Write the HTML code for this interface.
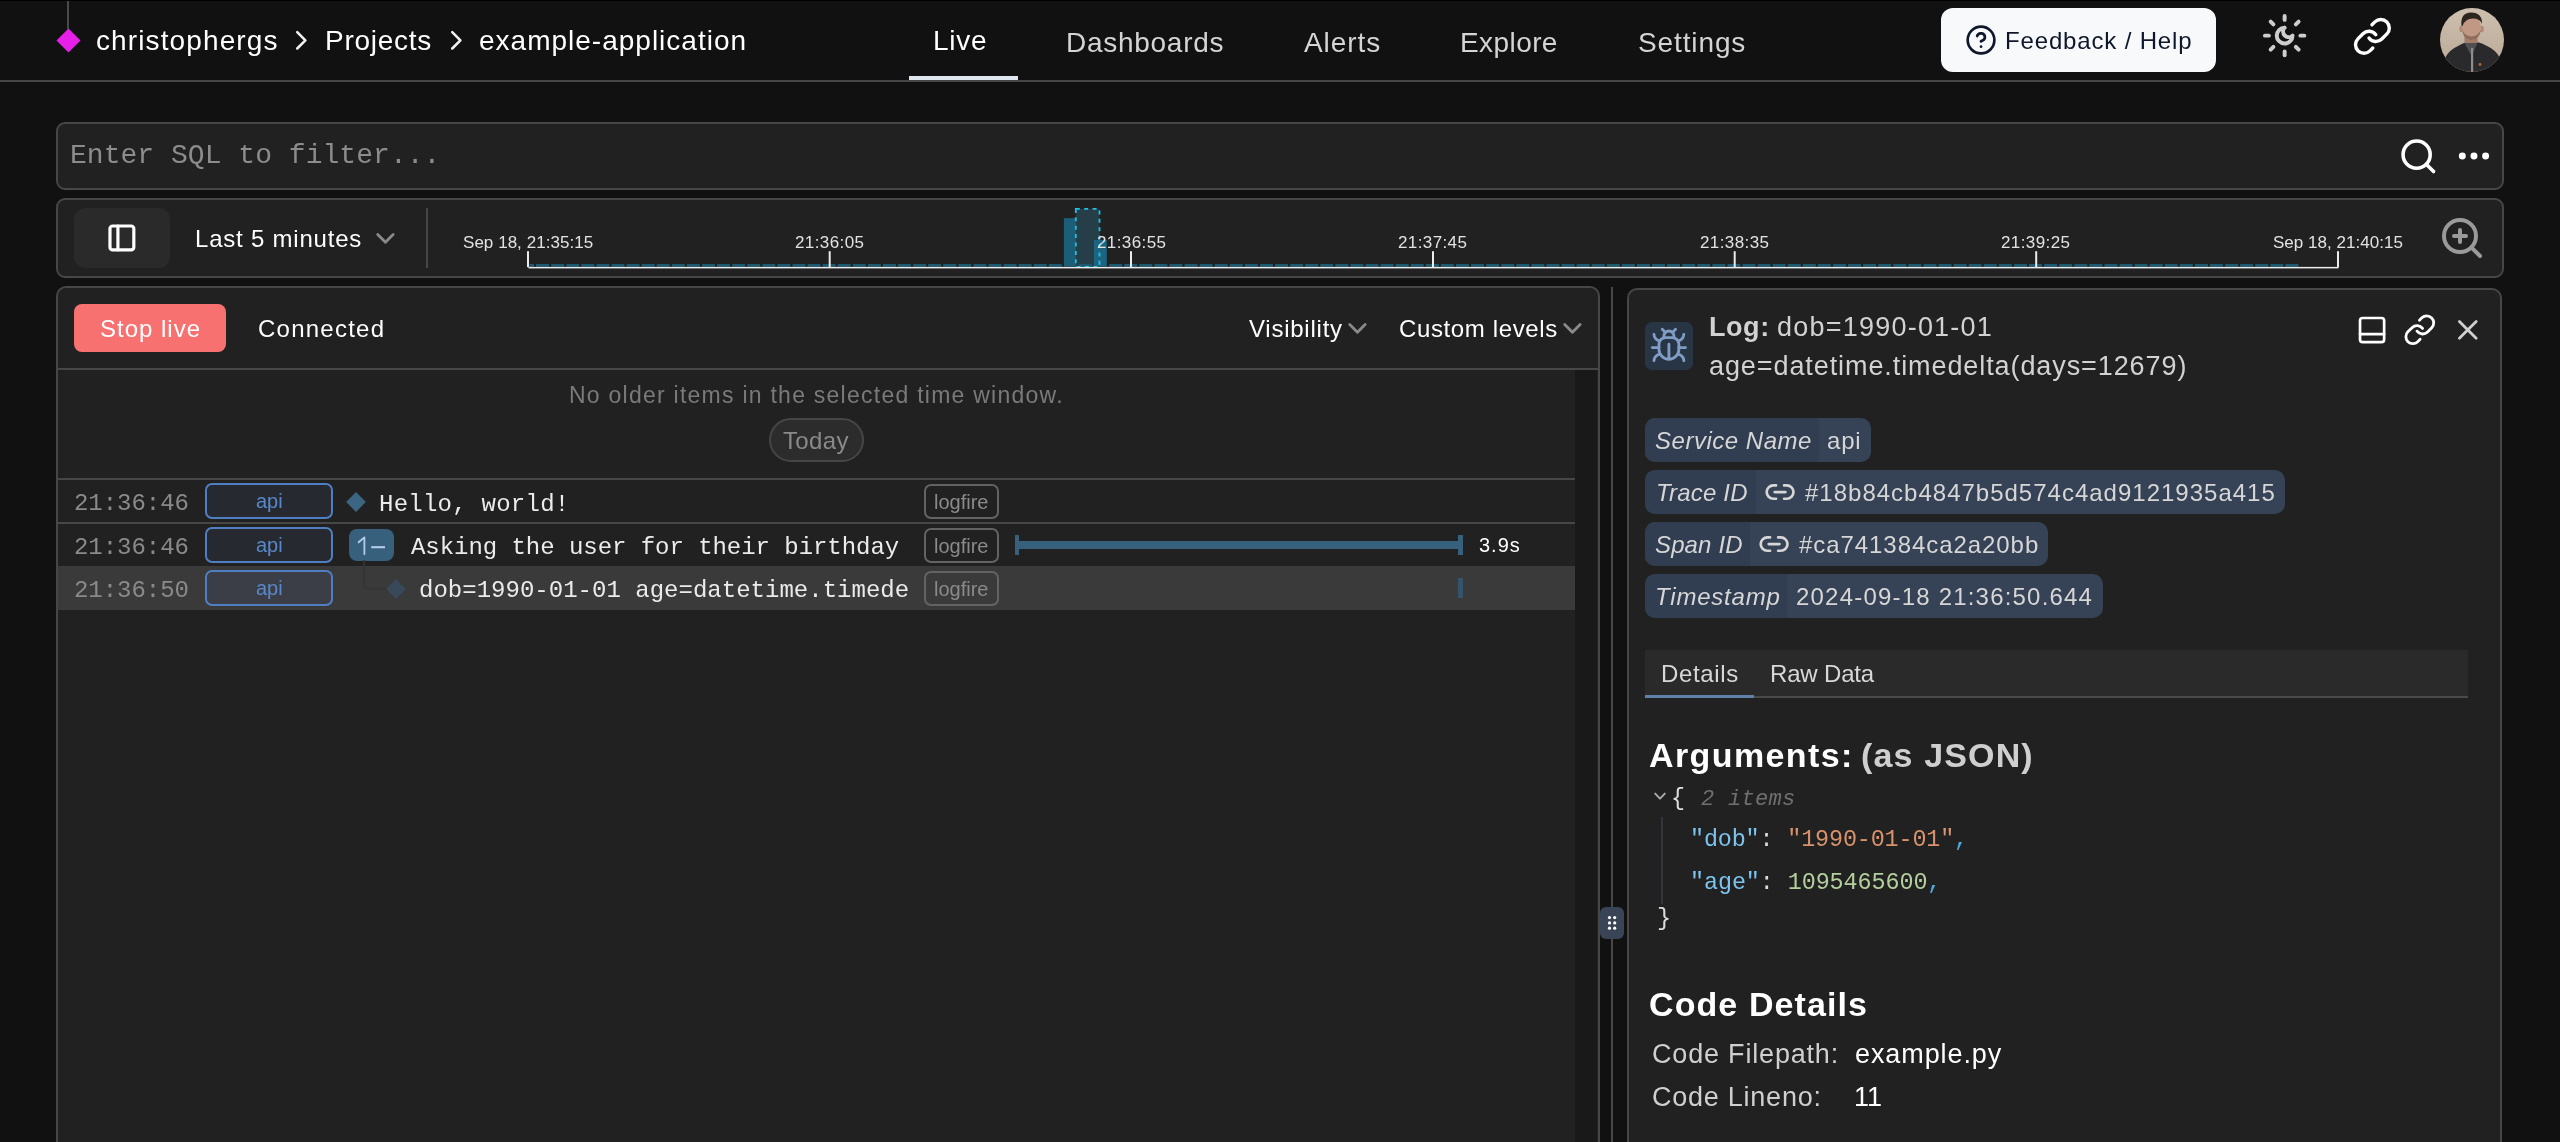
<!DOCTYPE html>
<html><head><meta charset="utf-8">
<style>
*{box-sizing:border-box;margin:0;padding:0}
html,body{width:2560px;height:1142px;overflow:hidden;background:#111111;font-family:"Liberation Sans",sans-serif;color:#fff}
.a{position:absolute;white-space:pre;line-height:1;will-change:transform}
.s{position:absolute}
</style></head><body>
<div class="s" style="left:0;top:0;width:2560px;height:1px;background:#000"></div>
<!-- ===== header ===== -->
<div class="s" style="left:67px;top:1px;width:2px;height:28px;background:#4a4a4a"></div>
<div class="s" style="left:59.5px;top:31.5px;width:17px;height:17px;background:#e620e9;transform:rotate(45deg)"></div>


<div class="s" style="left:909px;top:76px;width:109px;height:4px;background:#e0e6ef"></div>
<div class="s" style="left:1941px;top:8px;width:275px;height:64px;border-radius:12px;background:#f8f9fb"></div>

<!-- sun-moon -->

<!-- link -->

<!-- avatar -->
<svg class="s" style="left:2440px;top:8px" width="64" height="64" viewBox="0 0 64 64"><defs><clipPath id="av"><circle cx="32" cy="32" r="32"/></clipPath><linearGradient id="avbg" x1="0" y1="0" x2="0" y2="1"><stop offset="0" stop-color="#cdbfae"/><stop offset="1" stop-color="#b9a896"/></linearGradient></defs><g clip-path="url(#av)">
<rect width="64" height="64" fill="url(#avbg)"/>
<path d="M2 64 L5 50 Q9 42 18 38 Q23 35 27 34 L37 34 Q42 35 47 38 Q56 42 60 50 L63 64 Z" fill="#2a292b"/>
<path d="M24.5 35 L31.5 48 L37.5 35 Z" fill="#505052"/>
<rect x="24.5" y="26" width="13" height="9" fill="#a47d69"/>
<ellipse cx="21.3" cy="21" rx="2" ry="3.2" fill="#b08a76"/>
<ellipse cx="41.8" cy="21" rx="2" ry="3.2" fill="#b08a76"/>
<ellipse cx="31.5" cy="20" rx="9.6" ry="11.6" fill="#c09884"/>
<path d="M22.2 22 Q23 31 31.5 32 Q40 31 40.8 22 Q38 28 31.5 28.5 Q25 28 22.2 22 Z" fill="#7d5f50" opacity="0.75"/>
<path d="M21.5 18 Q20 5 31 4.6 Q42.5 5 42 16 Q40 10.5 33 10.5 Q25 10.5 22.5 18 Z" fill="#2d2520"/>
<rect x="31" y="40" width="2.2" height="24" fill="#8d8d8d"/>
<circle cx="40" cy="56.5" r="1.4" fill="#b8643a"/>
</g></svg>
<div class="s" style="left:0;top:80px;width:2560px;height:2px;background:#474747"></div>

<!-- ===== SQL box ===== -->
<div class="s" style="left:56px;top:122px;width:2448px;height:68px;border:2px solid #474747;border-radius:9px;background:#212121"></div>



<!-- ===== timeline box ===== -->
<div class="s" style="left:56px;top:198px;width:2448px;height:80px;border:2px solid #474747;border-radius:9px;background:#212121"></div>
<div class="s" style="left:74px;top:208px;width:96px;height:60px;border-radius:11px;background:#2a2a2a"></div>


<div class="s" style="left:426px;top:208px;width:2px;height:60px;background:#474747"></div>
<svg class="s" style="left:0;top:0" width="2560" height="290" viewBox="0 0 2560 290">
<g fill="#1d5a6f"><rect x="529.50" y="264" width="4.52" height="2.9"/><rect x="536.10" y="264" width="13.00" height="2.9"/><rect x="551.18" y="264" width="13.00" height="2.9"/><rect x="566.26" y="264" width="13.00" height="2.9"/><rect x="581.34" y="264" width="13.00" height="2.9"/><rect x="596.42" y="264" width="13.00" height="2.9"/><rect x="611.50" y="264" width="13.00" height="2.9"/><rect x="626.58" y="264" width="13.00" height="2.9"/><rect x="641.66" y="264" width="13.00" height="2.9"/><rect x="656.74" y="264" width="13.00" height="2.9"/><rect x="671.82" y="264" width="13.00" height="2.9"/><rect x="686.90" y="264" width="13.00" height="2.9"/><rect x="701.98" y="264" width="13.00" height="2.9"/><rect x="717.06" y="264" width="13.00" height="2.9"/><rect x="732.14" y="264" width="13.00" height="2.9"/><rect x="747.22" y="264" width="13.00" height="2.9"/><rect x="762.30" y="264" width="13.00" height="2.9"/><rect x="777.38" y="264" width="13.00" height="2.9"/><rect x="792.46" y="264" width="13.00" height="2.9"/><rect x="807.54" y="264" width="13.00" height="2.9"/><rect x="822.62" y="264" width="13.00" height="2.9"/><rect x="837.70" y="264" width="13.00" height="2.9"/><rect x="852.78" y="264" width="13.00" height="2.9"/><rect x="867.86" y="264" width="13.00" height="2.9"/><rect x="882.94" y="264" width="13.00" height="2.9"/><rect x="898.02" y="264" width="13.00" height="2.9"/><rect x="913.10" y="264" width="13.00" height="2.9"/><rect x="928.18" y="264" width="13.00" height="2.9"/><rect x="943.26" y="264" width="13.00" height="2.9"/><rect x="958.34" y="264" width="13.00" height="2.9"/><rect x="973.42" y="264" width="13.00" height="2.9"/><rect x="988.50" y="264" width="13.00" height="2.9"/><rect x="1003.58" y="264" width="13.00" height="2.9"/><rect x="1018.66" y="264" width="13.00" height="2.9"/><rect x="1033.74" y="264" width="13.00" height="2.9"/><rect x="1048.82" y="264" width="13.00" height="2.9"/><rect x="1078.98" y="264" width="13.00" height="2.9"/><rect x="1109.14" y="264" width="13.00" height="2.9"/><rect x="1124.22" y="264" width="13.00" height="2.9"/><rect x="1139.30" y="264" width="13.00" height="2.9"/><rect x="1154.38" y="264" width="13.00" height="2.9"/><rect x="1169.46" y="264" width="13.00" height="2.9"/><rect x="1184.54" y="264" width="13.00" height="2.9"/><rect x="1199.62" y="264" width="13.00" height="2.9"/><rect x="1214.70" y="264" width="13.00" height="2.9"/><rect x="1229.78" y="264" width="13.00" height="2.9"/><rect x="1244.86" y="264" width="13.00" height="2.9"/><rect x="1259.94" y="264" width="13.00" height="2.9"/><rect x="1275.02" y="264" width="13.00" height="2.9"/><rect x="1290.10" y="264" width="13.00" height="2.9"/><rect x="1305.18" y="264" width="13.00" height="2.9"/><rect x="1320.26" y="264" width="13.00" height="2.9"/><rect x="1335.34" y="264" width="13.00" height="2.9"/><rect x="1350.42" y="264" width="13.00" height="2.9"/><rect x="1365.50" y="264" width="13.00" height="2.9"/><rect x="1380.58" y="264" width="13.00" height="2.9"/><rect x="1395.66" y="264" width="13.00" height="2.9"/><rect x="1410.74" y="264" width="13.00" height="2.9"/><rect x="1425.82" y="264" width="13.00" height="2.9"/><rect x="1440.90" y="264" width="13.00" height="2.9"/><rect x="1455.98" y="264" width="13.00" height="2.9"/><rect x="1471.06" y="264" width="13.00" height="2.9"/><rect x="1486.14" y="264" width="13.00" height="2.9"/><rect x="1501.22" y="264" width="13.00" height="2.9"/><rect x="1516.30" y="264" width="13.00" height="2.9"/><rect x="1531.38" y="264" width="13.00" height="2.9"/><rect x="1546.46" y="264" width="13.00" height="2.9"/><rect x="1561.54" y="264" width="13.00" height="2.9"/><rect x="1576.62" y="264" width="13.00" height="2.9"/><rect x="1591.70" y="264" width="13.00" height="2.9"/><rect x="1606.78" y="264" width="13.00" height="2.9"/><rect x="1621.86" y="264" width="13.00" height="2.9"/><rect x="1636.94" y="264" width="13.00" height="2.9"/><rect x="1652.02" y="264" width="13.00" height="2.9"/><rect x="1667.10" y="264" width="13.00" height="2.9"/><rect x="1682.18" y="264" width="13.00" height="2.9"/><rect x="1697.26" y="264" width="13.00" height="2.9"/><rect x="1712.34" y="264" width="13.00" height="2.9"/><rect x="1727.42" y="264" width="13.00" height="2.9"/><rect x="1742.50" y="264" width="13.00" height="2.9"/><rect x="1757.58" y="264" width="13.00" height="2.9"/><rect x="1772.66" y="264" width="13.00" height="2.9"/><rect x="1787.74" y="264" width="13.00" height="2.9"/><rect x="1802.82" y="264" width="13.00" height="2.9"/><rect x="1817.90" y="264" width="13.00" height="2.9"/><rect x="1832.98" y="264" width="13.00" height="2.9"/><rect x="1848.06" y="264" width="13.00" height="2.9"/><rect x="1863.14" y="264" width="13.00" height="2.9"/><rect x="1878.22" y="264" width="13.00" height="2.9"/><rect x="1893.30" y="264" width="13.00" height="2.9"/><rect x="1908.38" y="264" width="13.00" height="2.9"/><rect x="1923.46" y="264" width="13.00" height="2.9"/><rect x="1938.54" y="264" width="13.00" height="2.9"/><rect x="1953.62" y="264" width="13.00" height="2.9"/><rect x="1968.70" y="264" width="13.00" height="2.9"/><rect x="1983.78" y="264" width="13.00" height="2.9"/><rect x="1998.86" y="264" width="13.00" height="2.9"/><rect x="2013.94" y="264" width="13.00" height="2.9"/><rect x="2029.02" y="264" width="13.00" height="2.9"/><rect x="2044.10" y="264" width="13.00" height="2.9"/><rect x="2059.18" y="264" width="13.00" height="2.9"/><rect x="2074.26" y="264" width="13.00" height="2.9"/><rect x="2089.34" y="264" width="13.00" height="2.9"/><rect x="2104.42" y="264" width="13.00" height="2.9"/><rect x="2119.50" y="264" width="13.00" height="2.9"/><rect x="2134.58" y="264" width="13.00" height="2.9"/><rect x="2149.66" y="264" width="13.00" height="2.9"/><rect x="2164.74" y="264" width="13.00" height="2.9"/><rect x="2179.82" y="264" width="13.00" height="2.9"/><rect x="2194.90" y="264" width="13.00" height="2.9"/><rect x="2209.98" y="264" width="13.00" height="2.9"/><rect x="2225.06" y="264" width="13.00" height="2.9"/><rect x="2240.14" y="264" width="13.00" height="2.9"/><rect x="2255.22" y="264" width="13.00" height="2.9"/><rect x="2270.30" y="264" width="13.00" height="2.9"/><rect x="2285.38" y="264" width="13.00" height="2.9"/></g>
<rect x="1063.9" y="218.1" width="13" height="48.4" fill="#1b5e78"/>
<rect x="1075.8" y="208.9" width="23.7" height="58.1" fill="#253e48"/>
<rect x="1093.9" y="239.9" width="12.9" height="26.6" fill="#1b6580"/>
<rect x="1078.9" y="264" width="13" height="2.9" fill="#1d5a6f"/><rect x="1075.8" y="208.9" width="23.7" height="58.1" fill="none" stroke="#1ec0e6" stroke-width="1.8" stroke-dasharray="4 4.4"/>
<rect x="528.5" y="266.9" width="1810" height="1.5" fill="#ececec"/>
<g fill="#ececec"><rect x="527" y="251.2" width="2" height="16"/><rect x="828.7" y="251.2" width="2" height="16"/><rect x="1130" y="251.2" width="2" height="16"/><rect x="1432" y="251.2" width="2" height="16"/><rect x="1733.7" y="251.2" width="2" height="16"/><rect x="2035.2" y="251.2" width="2" height="16"/><rect x="2337" y="251.2" width="2" height="16"/></g>
</svg>


<!-- ===== left panel ===== -->
<div class="s" style="left:56px;top:286px;width:1544px;height:900px;border:2px solid #474747;border-radius:10px;background:#212121"></div>
<div class="s" style="left:74px;top:304px;width:152px;height:48px;border-radius:8px;background:#f87171"></div>


<div class="s" style="left:58px;top:368px;width:1540px;height:2px;background:#474747"></div>
<div class="s" style="left:1575px;top:370px;width:22px;height:780px;background:#191919"></div>
<div class="s" style="left:769px;top:418px;width:95px;height:44px;border:2px solid #464646;border-radius:22px;background:#2c2c2c"></div>
<div class="s" style="left:58px;top:478px;width:1517px;height:2px;background:#474747"></div>
<div class="s" style="left:58px;top:522px;width:1517px;height:2px;background:#474747"></div>
<div class="s" style="left:58px;top:566px;width:1517px;height:44px;background:#3a3a3a"></div>
<!-- api badges -->
<div class="s" style="left:205px;top:483px;width:128px;height:36px;border:2px solid #4f7fc0;border-radius:7px;background:#262930"></div>
<div class="s" style="left:205px;top:527px;width:128px;height:36px;border:2px solid #4f7fc0;border-radius:7px;background:#262930"></div>
<div class="s" style="left:205px;top:570px;width:128px;height:36px;border:2px solid #4f7fc0;border-radius:7px;background:#3b3e46"></div>
<!-- logfire badges -->
<div class="s" style="left:924px;top:484px;width:75px;height:35px;border:2px solid #636363;border-radius:7px"></div>
<div class="s" style="left:924px;top:527.5px;width:75px;height:35px;border:2px solid #636363;border-radius:7px"></div>
<div class="s" style="left:924px;top:571px;width:75px;height:35px;border:2px solid #636363;border-radius:7px"></div>
<!-- diamonds -->
<div class="s" style="left:349px;top:495px;width:14px;height:14px;background:#3b6580;transform:rotate(45deg)"></div>
<div class="s" style="left:389px;top:581.7px;width:14px;height:14px;background:#37495b;transform:rotate(45deg)"></div>
<!-- 1- badge -->
<div class="s" style="left:349px;top:529px;width:45px;height:32px;border-radius:8px;background:#36607c"></div>
<svg class="s" style="left:349px;top:529px" width="45" height="32" viewBox="0 0 45 32"><path d="M9.6 13.3 L15.4 8.4 V25" fill="none" stroke="#b4cdec" stroke-width="1.8" stroke-linejoin="round" stroke-linecap="round"/><path d="M22.2 18.2 H36" stroke="#b4cdec" stroke-width="2.1"/></svg>
<svg class="s" style="left:356px;top:560px" width="40" height="32" viewBox="0 0 40 32"><path d="M8 0 V23.5 Q8 28.6 13 28.6 H31" fill="none" stroke="#353535" stroke-width="1.8"/></svg>
<!-- duration bar -->
<div class="s" style="left:1015px;top:541px;width:448px;height:8px;background:#36607c"></div>
<div class="s" style="left:1015px;top:535px;width:4px;height:20px;background:#36607c"></div>
<div class="s" style="left:1458px;top:535px;width:5px;height:20px;background:#36607c"></div>
<div class="s" style="left:1458px;top:578px;width:5px;height:20px;background:#34546e"></div>

<!-- ===== gutter ===== -->
<div class="s" style="left:1611px;top:287px;width:2px;height:860px;background:#474747"></div>
<div class="s" style="left:1600px;top:907px;width:24px;height:32px;border-radius:6px;background:#394456"></div>
<svg class="s" style="left:1600px;top:907px" width="24" height="32" viewBox="0 0 24 32"><g fill="#fff"><circle cx="9.5" cy="10.6" r="1.6"/><circle cx="14.7" cy="10.6" r="1.6"/><circle cx="9.5" cy="15.9" r="1.6"/><circle cx="14.7" cy="15.9" r="1.6"/><circle cx="9.5" cy="21.2" r="1.6"/><circle cx="14.7" cy="21.2" r="1.6"/></g></svg>

<!-- ===== right panel ===== -->
<div class="s" style="left:1627px;top:288px;width:875px;height:900px;border:2px solid #474747;border-radius:10px;background:#212121"></div>
<div class="s" style="left:1645px;top:322px;width:48px;height:48px;border-radius:7px;background:#283545"></div>




<!-- chips -->
<div class="s" style="left:1645px;top:418px;width:226px;height:44px;border-radius:10px;background:#364255;overflow:hidden"><div class="s" style="left:0;top:0;width:174px;height:44px;background:#313d50"></div></div>
<div class="s" style="left:1645px;top:470px;width:640px;height:44px;border-radius:10px;background:#364255;overflow:hidden"><div class="s" style="left:0;top:0;width:111px;height:44px;background:#313d50"></div></div>
<div class="s" style="left:1645px;top:522px;width:403px;height:44px;border-radius:10px;background:#364255;overflow:hidden"><div class="s" style="left:0;top:0;width:105px;height:44px;background:#313d50"></div></div>
<div class="s" style="left:1645px;top:574px;width:458px;height:44px;border-radius:10px;background:#364255;overflow:hidden"><div class="s" style="left:0;top:0;width:142px;height:44px;background:#313d50"></div></div>


<!-- tabs -->
<div class="s" style="left:1645px;top:650px;width:823px;height:48px;background:#2a2a2a"></div>
<div class="s" style="left:1645px;top:696px;width:823px;height:2px;background:#4a4a4a"></div>
<div class="s" style="left:1645px;top:694.8px;width:109px;height:3px;background:#5f80a8"></div>
<!-- json -->
<svg class="s" style="left:1650px;top:788px" width="20" height="16" viewBox="0 0 20 16"><path d="M5.2 5.6 L10 10.6 L14.8 5.6" fill="none" stroke="#aaaaaa" stroke-width="2" stroke-linecap="round" stroke-linejoin="round"/></svg>
<div class="s" style="left:1661px;top:817px;width:2px;height:87px;background:#35353c"></div>
<svg class="s" style="left:1964.97px;top:23.67px" width="32.06" height="32.06" viewBox="0 0 24 24" fill="none" stroke="#0f172a" stroke-width="2" stroke-linecap="round" stroke-linejoin="round"><circle cx="12" cy="12" r="10"/><path d="M9.09 9a3 3 0 0 1 5.83 1c0 2-3 3-3 3"/><path d="M12 17h.01"/></svg>
<svg class="s" style="left:2260.86px;top:12.30px" width="47.28" height="47.28" viewBox="0 0 24 24" fill="none" stroke="#cdcdcd" stroke-width="2" stroke-linecap="round" stroke-linejoin="round"><path d="M12 8a2.83 2.83 0 0 0 4 4 4 4 0 1 1-4-4"/><path d="M12 2v2"/><path d="M12 20v2"/><path d="m4.9 4.9 1.4 1.4"/><path d="m17.7 17.7 1.4 1.4"/><path d="M2 12h2"/><path d="M20 12h2"/><path d="m6.3 17.7-1.4 1.4"/><path d="m19.1 4.9-1.4 1.4"/></svg>
<svg class="s" style="left:2351.50px;top:15.55px" width="40.80" height="40.80" viewBox="0 0 24 24" fill="none" stroke="#ffffff" stroke-width="2" stroke-linecap="round" stroke-linejoin="round"><path d="M10 13a5 5 0 0 0 7.54.54l3-3a5 5 0 0 0-7.07-7.07l-1.72 1.71"/><path d="M14 11a5 5 0 0 0-7.54-.54l-3 3a5 5 0 0 0 7.07 7.07l1.71-1.71"/></svg>
<svg class="s" style="left:2398.07px;top:135.67px" width="40.66" height="40.66" viewBox="0 0 24 24" fill="none" stroke="#ffffff" stroke-width="2.1" stroke-linecap="round" stroke-linejoin="round"><circle cx="11" cy="11" r="8"/><path d="m21 21-4.3-4.3"/></svg>
<svg class="s" style="left:2454.03px;top:135.83px" width="39.94" height="39.94" viewBox="0 0 24 24" fill="none" stroke="#ffffff" stroke-width="2.2" stroke-linecap="round" stroke-linejoin="round"><circle cx="12" cy="12" r="1"/><circle cx="19" cy="12" r="1"/><circle cx="5" cy="12" r="1"/></svg>
<svg class="s" style="left:2438.00px;top:213.90px" width="48.00" height="48.00" viewBox="0 0 24 24" fill="none" stroke="#9a9a9a" stroke-width="2" stroke-linecap="round" stroke-linejoin="round"><circle cx="11" cy="11" r="8"/><line x1="21" x2="16.65" y1="21" y2="16.65"/><line x1="11" x2="11" y1="8" y2="14"/><line x1="8" x2="14" y1="11" y2="11"/></svg>
<svg class="s" style="left:105.95px;top:221.95px" width="31.80" height="31.80" viewBox="0 0 24 24" fill="none" stroke="#ffffff" stroke-width="2.4" stroke-linecap="round" stroke-linejoin="round"><rect width="18" height="18" x="3" y="3" rx="2"/><path d="M9 3v18"/></svg>
<svg class="s" style="left:369.57px;top:222.77px" width="30.86" height="30.86" viewBox="0 0 24 24" fill="none" stroke="#8a8a8a" stroke-width="2.2" stroke-linecap="round" stroke-linejoin="round"><path d="m6 9 6 6 6-6"/></svg>
<svg class="s" style="left:1342.47px;top:312.67px" width="30.86" height="30.86" viewBox="0 0 24 24" fill="none" stroke="#8a8a8a" stroke-width="2.2" stroke-linecap="round" stroke-linejoin="round"><path d="m6 9 6 6 6-6"/></svg>
<svg class="s" style="left:1557.47px;top:312.67px" width="30.86" height="30.86" viewBox="0 0 24 24" fill="none" stroke="#8a8a8a" stroke-width="2.2" stroke-linecap="round" stroke-linejoin="round"><path d="m6 9 6 6 6-6"/></svg>
<svg class="s" style="left:284.68px;top:23.68px" width="32.64" height="32.64" viewBox="0 0 24 24" fill="none" stroke="#f0f0f0" stroke-width="1.9" stroke-linecap="round" stroke-linejoin="round"><path d="m9 18 6-6-6-6"/></svg>
<svg class="s" style="left:439.68px;top:23.68px" width="32.64" height="32.64" viewBox="0 0 24 24" fill="none" stroke="#f0f0f0" stroke-width="1.9" stroke-linecap="round" stroke-linejoin="round"><path d="m9 18 6-6-6-6"/></svg>
<svg class="s" style="left:2451.20px;top:313.05px" width="33.60" height="33.60" viewBox="0 0 24 24" fill="none" stroke="#cfcfcf" stroke-width="2" stroke-linecap="round" stroke-linejoin="round"><path d="M18 6 6 18"/><path d="m6 6 12 12"/></svg>
<svg class="s" style="left:2355.52px;top:313.92px" width="32.16" height="32.16" viewBox="0 0 24 24" fill="none" stroke="#ffffff" stroke-width="2" stroke-linecap="round" stroke-linejoin="round"><rect width="18" height="18" x="3" y="3" rx="2"/><path d="M3 15h18"/></svg>
<svg class="s" style="left:2403.00px;top:313.20px" width="33.60" height="33.60" viewBox="0 0 24 24" fill="none" stroke="#ffffff" stroke-width="2" stroke-linecap="round" stroke-linejoin="round"><path d="M10 13a5 5 0 0 0 7.54.54l3-3a5 5 0 0 0-7.07-7.07l-1.72 1.71"/><path d="M14 11a5 5 0 0 0-7.54-.54l-3 3a5 5 0 0 0 7.07 7.07l1.71-1.71"/></svg>
<svg class="s" style="left:1649.33px;top:326.21px" width="39.84" height="39.84" viewBox="0 0 24 24" fill="none" stroke="#809dc5" stroke-width="1.7" stroke-linecap="round" stroke-linejoin="round"><path d="m8 2 1.88 1.88"/><path d="M14.12 3.88 16 2"/><path d="M9 7.13v-1a3.003 3.003 0 1 1 6 0v1"/><path d="M12 20c-3.3 0-6-2.7-6-6v-3a4 4 0 0 1 4-4h4a4 4 0 0 1 4 4v3c0 3.3-2.7 6-6 6"/><path d="M12 20v-9"/><path d="M6.53 9C4.6 8.8 3 7.1 3 5"/><path d="M6 13H2"/><path d="M3 21c0-2.1 1.7-3.9 3.8-4"/><path d="M20.97 5c0 2.1-1.6 3.8-3.5 4"/><path d="M22 13h-4"/><path d="M17.2 17c2.1.1 3.8 1.9 3.8 4"/></svg>
<svg class="s" style="left:1763.67px;top:475.92px" width="32.16" height="32.16" viewBox="0 0 24 24" fill="none" stroke="#d6d6d6" stroke-width="2" stroke-linecap="round" stroke-linejoin="round"><path d="M9 17H7A5 5 0 0 1 7 7h2"/><path d="M15 7h2a5 5 0 1 1 0 10h-2"/><line x1="8" x2="16" y1="12" y2="12"/></svg>
<svg class="s" style="left:1757.97px;top:527.92px" width="32.16" height="32.16" viewBox="0 0 24 24" fill="none" stroke="#d6d6d6" stroke-width="2" stroke-linecap="round" stroke-linejoin="round"><path d="M9 17H7A5 5 0 0 1 7 7h2"/><path d="M15 7h2a5 5 0 1 1 0 10h-2"/><line x1="8" x2="16" y1="12" y2="12"/></svg>
<div class="a" style="left:95.60px;top:27.00px;font-family:'Liberation Sans';font-size:28px;font-weight:400;font-style:normal;letter-spacing:1.117px;color:#ffffff">christophergs</div>
<div class="a" style="left:324.80px;top:27.00px;font-family:'Liberation Sans';font-size:28px;font-weight:400;font-style:normal;letter-spacing:0.743px;color:#ffffff">Projects</div>
<div class="a" style="left:479.00px;top:27.00px;font-family:'Liberation Sans';font-size:28px;font-weight:400;font-style:normal;letter-spacing:1.000px;color:#ffffff">example-application</div>
<div class="a" style="left:932.75px;top:27.25px;font-family:'Liberation Sans';font-size:28px;font-weight:400;font-style:normal;letter-spacing:0.750px;color:#ffffff">Live</div>
<div class="a" style="left:1065.50px;top:29.20px;font-family:'Liberation Sans';font-size:28px;font-weight:400;font-style:normal;letter-spacing:0.722px;color:#d4d4d4">Dashboards</div>
<div class="a" style="left:1303.80px;top:29.20px;font-family:'Liberation Sans';font-size:28px;font-weight:400;font-style:normal;letter-spacing:0.920px;color:#d4d4d4">Alerts</div>
<div class="a" style="left:1459.70px;top:29.20px;font-family:'Liberation Sans';font-size:28px;font-weight:400;font-style:normal;letter-spacing:0.417px;color:#d4d4d4">Explore</div>
<div class="a" style="left:1637.80px;top:29.20px;font-family:'Liberation Sans';font-size:28px;font-weight:400;font-style:normal;letter-spacing:0.886px;color:#d4d4d4">Settings</div>
<div class="a" style="left:2004.90px;top:28.90px;font-family:'Liberation Sans';font-size:24px;font-weight:400;font-style:normal;letter-spacing:0.843px;color:#0f172a">Feedback / Help</div>
<div class="a" style="left:69.70px;top:141.50px;font-family:'Liberation Mono';font-size:28px;font-weight:400;font-style:normal;letter-spacing:0.033px;color:#8c8c8c">Enter SQL to filter...</div>
<div class="a" style="left:194.60px;top:227.20px;font-family:'Liberation Sans';font-size:24px;font-weight:400;font-style:normal;letter-spacing:0.785px;color:#ffffff">Last 5 minutes</div>
<div class="a" style="left:462.60px;top:234.10px;font-family:'Liberation Sans';font-size:17px;font-weight:400;font-style:normal;letter-spacing:0.040px;color:#e2e2e2">Sep 18, 21:35:15</div>
<div class="a" style="left:794.55px;top:234.10px;font-family:'Liberation Sans';font-size:17px;font-weight:400;font-style:normal;letter-spacing:0.414px;color:#e2e2e2">21:36:05</div>
<div class="a" style="left:1096.60px;top:234.10px;font-family:'Liberation Sans';font-size:17px;font-weight:400;font-style:normal;letter-spacing:0.414px;color:#e2e2e2">21:36:55</div>
<div class="a" style="left:1398.00px;top:234.10px;font-family:'Liberation Sans';font-size:17px;font-weight:400;font-style:normal;letter-spacing:0.386px;color:#e2e2e2">21:37:45</div>
<div class="a" style="left:1699.55px;top:234.10px;font-family:'Liberation Sans';font-size:17px;font-weight:400;font-style:normal;letter-spacing:0.414px;color:#e2e2e2">21:38:35</div>
<div class="a" style="left:2001.05px;top:234.10px;font-family:'Liberation Sans';font-size:17px;font-weight:400;font-style:normal;letter-spacing:0.414px;color:#e2e2e2">21:39:25</div>
<div class="a" style="left:2272.50px;top:234.10px;font-family:'Liberation Sans';font-size:17px;font-weight:400;font-style:normal;letter-spacing:0.033px;color:#e2e2e2">Sep 18, 21:40:15</div>
<div class="a" style="left:100.20px;top:317.20px;font-family:'Liberation Sans';font-size:24px;font-weight:400;font-style:normal;letter-spacing:1.000px;color:#ffffff">Stop live</div>
<div class="a" style="left:257.80px;top:317.20px;font-family:'Liberation Sans';font-size:24px;font-weight:400;font-style:normal;letter-spacing:1.237px;color:#ffffff">Connected</div>
<div class="a" style="left:1248.50px;top:316.80px;font-family:'Liberation Sans';font-size:24px;font-weight:400;font-style:normal;letter-spacing:0.756px;color:#ffffff">Visibility</div>
<div class="a" style="left:1398.50px;top:316.80px;font-family:'Liberation Sans';font-size:24px;font-weight:400;font-style:normal;letter-spacing:0.625px;color:#ffffff">Custom levels</div>
<div class="a" style="left:569.20px;top:383.90px;font-family:'Liberation Sans';font-size:23px;font-weight:400;font-style:normal;letter-spacing:1.250px;color:#7a7a7a">No older items in the selected time window.</div>
<div class="a" style="left:783.40px;top:428.80px;font-family:'Liberation Sans';font-size:24px;font-weight:400;font-style:normal;letter-spacing:0.350px;color:#8a8a8a">Today</div>
<div class="a" style="left:74.20px;top:492.10px;font-family:'Liberation Mono';font-size:24px;font-weight:400;font-style:normal;letter-spacing:-0.029px;color:#8a8a8a">21:36:46</div>
<div class="a" style="left:74.20px;top:536.10px;font-family:'Liberation Mono';font-size:24px;font-weight:400;font-style:normal;letter-spacing:-0.029px;color:#8a8a8a">21:36:46</div>
<div class="a" style="left:74.20px;top:579.30px;font-family:'Liberation Mono';font-size:24px;font-weight:400;font-style:normal;letter-spacing:-0.029px;color:#8a8a8a">21:36:50</div>
<div class="a" style="left:255.60px;top:491.00px;font-family:'Liberation Sans';font-size:20px;font-weight:400;font-style:normal;letter-spacing:-0.050px;color:#5888c8">api</div>
<div class="a" style="left:255.60px;top:535.00px;font-family:'Liberation Sans';font-size:20px;font-weight:400;font-style:normal;letter-spacing:-0.050px;color:#5888c8">api</div>
<div class="a" style="left:255.60px;top:578.00px;font-family:'Liberation Sans';font-size:20px;font-weight:400;font-style:normal;letter-spacing:-0.050px;color:#5888c8">api</div>
<div class="a" style="left:378.50px;top:492.50px;font-family:'Liberation Mono';font-size:24px;font-weight:400;font-style:normal;letter-spacing:0.250px;color:#ebebeb">Hello, world!</div>
<div class="a" style="left:411.25px;top:536.25px;font-family:'Liberation Mono';font-size:24px;font-weight:400;font-style:normal;letter-spacing:-0.045px;color:#ebebeb">Asking the user for their birthday</div>
<div class="a" style="left:419.00px;top:579.00px;font-family:'Liberation Mono';font-size:24px;font-weight:400;font-style:normal;letter-spacing:0.015px;color:#ebebeb">dob=1990-01-01 age=datetime.timede</div>
<div class="a" style="left:934.00px;top:491.75px;font-family:'Liberation Sans';font-size:20px;font-weight:400;font-style:normal;letter-spacing:0.000px;color:#8a8a8a">logfire</div>
<div class="a" style="left:934.00px;top:535.50px;font-family:'Liberation Sans';font-size:20px;font-weight:400;font-style:normal;letter-spacing:0.000px;color:#8a8a8a">logfire</div>
<div class="a" style="left:934.00px;top:578.75px;font-family:'Liberation Sans';font-size:20px;font-weight:400;font-style:normal;letter-spacing:0.000px;color:#8a8a8a">logfire</div>
<div class="a" style="left:1479.20px;top:535.30px;font-family:'Liberation Sans';font-size:20px;font-weight:400;font-style:normal;letter-spacing:1.000px;color:#ffffff">3.9s</div>
<div class="a" style="left:1708.90px;top:314.10px;font-family:'Liberation Sans';font-size:27px;font-weight:700;font-style:normal;letter-spacing:0.567px;color:#d2d2d2">Log:</div>
<div class="a" style="left:1776.70px;top:314.10px;font-family:'Liberation Sans';font-size:27px;font-weight:400;font-style:normal;letter-spacing:1.223px;color:#d2d2d2">dob=1990-01-01</div>
<div class="a" style="left:1709.20px;top:353.40px;font-family:'Liberation Sans';font-size:27px;font-weight:400;font-style:normal;letter-spacing:0.912px;color:#d2d2d2">age=datetime.timedelta(days=12679)</div>
<div class="a" style="left:1654.60px;top:429.40px;font-family:'Liberation Sans';font-size:24px;font-weight:400;font-style:italic;letter-spacing:0.518px;color:#d6d6d6">Service Name</div>
<div class="a" style="left:1827.10px;top:429.40px;font-family:'Liberation Sans';font-size:24px;font-weight:400;font-style:normal;letter-spacing:0.800px;color:#d6d6d6">api</div>
<div class="a" style="left:1655.90px;top:481.20px;font-family:'Liberation Sans';font-size:24px;font-weight:400;font-style:italic;letter-spacing:0.186px;color:#d6d6d6">Trace ID</div>
<div class="a" style="left:1805.00px;top:481.20px;font-family:'Liberation Sans';font-size:24px;font-weight:400;font-style:normal;letter-spacing:1.000px;color:#d6d6d6">#18b84cb4847b5d574c4ad9121935a415</div>
<div class="a" style="left:1655.00px;top:533.20px;font-family:'Liberation Sans';font-size:24px;font-weight:400;font-style:italic;letter-spacing:0.133px;color:#d6d6d6">Span ID</div>
<div class="a" style="left:1798.50px;top:533.20px;font-family:'Liberation Sans';font-size:24px;font-weight:400;font-style:normal;letter-spacing:0.938px;color:#d6d6d6">#ca741384ca2a20bb</div>
<div class="a" style="left:1654.80px;top:584.70px;font-family:'Liberation Sans';font-size:24px;font-weight:400;font-style:italic;letter-spacing:0.800px;color:#d6d6d6">Timestamp</div>
<div class="a" style="left:1796.30px;top:584.70px;font-family:'Liberation Sans';font-size:24px;font-weight:400;font-style:normal;letter-spacing:1.200px;color:#d6d6d6">2024-09-18 21:36:50.644</div>
<div class="a" style="left:1660.70px;top:662.20px;font-family:'Liberation Sans';font-size:24px;font-weight:400;font-style:normal;letter-spacing:0.650px;color:#d8d8d8">Details</div>
<div class="a" style="left:1770.40px;top:662.20px;font-family:'Liberation Sans';font-size:24px;font-weight:400;font-style:normal;letter-spacing:-0.171px;color:#d8d8d8">Raw Data</div>
<div class="a" style="left:1649.10px;top:737.80px;font-family:'Liberation Sans';font-size:34px;font-weight:700;font-style:normal;letter-spacing:1.389px;color:#ffffff">Arguments:</div>
<div class="a" style="left:1861.40px;top:737.80px;font-family:'Liberation Sans';font-size:34px;font-weight:700;font-style:normal;letter-spacing:1.150px;color:#cfcfcf">(as JSON)</div>
<div class="a" style="left:1700.70px;top:789.00px;font-family:'Liberation Mono';font-size:22px;font-weight:400;font-style:italic;letter-spacing:0.300px;color:#6f6f6f">2 items</div>
<div class="a" style="left:1671.10px;top:788.00px;font-family:'Liberation Mono';font-size:23.4px;font-weight:400;font-style:normal;letter-spacing:0.000px;color:#dddddd">{</div>
<div class="a" style="left:1690.30px;top:828.50px;font-family:'Liberation Mono';font-size:23.4px;font-weight:400;font-style:normal;letter-spacing:-0.137px;color:#7cc4ee"><span style="color:#7cc4ee">"dob"</span><span style="color:#dddddd">: </span><span style="color:#d9936c">"1990-01-01"</span><span style="color:#4fa8e0">,</span></div>
<div class="a" style="left:1690.30px;top:872.00px;font-family:'Liberation Mono';font-size:23.4px;font-weight:400;font-style:normal;letter-spacing:-0.076px;color:#7cc4ee"><span style="color:#7cc4ee">"age"</span><span style="color:#dddddd">: </span><span style="color:#b3cf9c">1095465600</span><span style="color:#4fa8e0">,</span></div>
<div class="a" style="left:1657.30px;top:908.00px;font-family:'Liberation Mono';font-size:23.4px;font-weight:400;font-style:normal;letter-spacing:0.000px;color:#dddddd">}</div>
<div class="a" style="left:1648.60px;top:987.00px;font-family:'Liberation Sans';font-size:34px;font-weight:700;font-style:normal;letter-spacing:1.091px;color:#ffffff">Code Details</div>
<div class="a" style="left:1651.60px;top:1040.90px;font-family:'Liberation Sans';font-size:27px;font-weight:400;font-style:normal;letter-spacing:0.815px;color:#cfcfcf">Code Filepath:</div>
<div class="a" style="left:1854.50px;top:1040.90px;font-family:'Liberation Sans';font-size:27px;font-weight:400;font-style:normal;letter-spacing:0.911px;color:#ffffff">example.py</div>
<div class="a" style="left:1651.60px;top:1084.40px;font-family:'Liberation Sans';font-size:27px;font-weight:400;font-style:normal;letter-spacing:0.755px;color:#cfcfcf">Code Lineno:</div>
<div class="a" style="left:1854.00px;top:1084.40px;font-family:'Liberation Sans';font-size:27px;font-weight:400;font-style:normal;letter-spacing:0.000px;color:#ffffff">1</div>
<div class="a" style="left:1867.30px;top:1084.40px;font-family:'Liberation Sans';font-size:27px;font-weight:400;font-style:normal;letter-spacing:0.000px;color:#ffffff">1</div>
</body></html>
